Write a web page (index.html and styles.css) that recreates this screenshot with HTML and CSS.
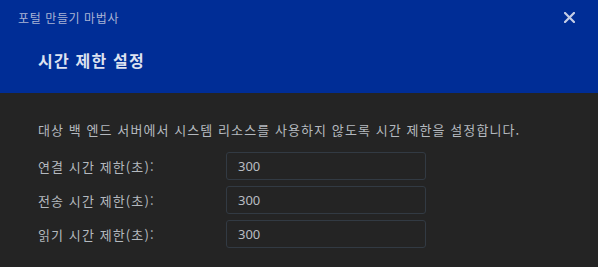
FILE: index.html
```html
<!DOCTYPE html>
<html lang="ko">
<head>
<meta charset="utf-8">
<link rel="stylesheet" href="styles.css">
</head>
<body>
<div class="dialog">
  <header class="head">
    <div class="topbar">
      <span class="wizard">포털 만들기 마법사</span>
      <button class="close" aria-label="닫기">
        <svg width="11" height="11" viewBox="0 0 11 11"><path d="M1 1 L10 10 M10 1 L1 10" stroke="#c4cde6" stroke-width="2.2" stroke-linecap="square"/></svg>
      </button>
    </div>
    <h1 class="title">시간 제한 설정</h1>
  </header>
  <main class="body">
    <p class="desc">대상 백 엔드 서버에서 시스템 리소스를 사용하지 않도록 시간 제한을 설정합니다.</p>
    <div class="row"><label class="label">연결 시간 제한(초):</label><input class="field" value="300"></div>
    <div class="row"><label class="label">전송 시간 제한(초):</label><input class="field" value="300"></div>
    <div class="row"><label class="label">읽기 시간 제한(초):</label><input class="field" value="300"></div>
  </main>
</div>
</body>
</html>
```
FILE: styles.css
```css
* { box-sizing: border-box; }
html, body { margin: 0; padding: 0; }
body {
  width: 598px;
  height: 267px;
  overflow: hidden;
  background: #242424;
  font-family: "Noto Sans CJK KR", "Noto Sans", sans-serif;
}
.head {
  background: #002d96;
  height: 93px;
  padding: 0 18px 0 18px;
}
.topbar {
  display: flex;
  justify-content: space-between;
  align-items: center;
  height: 35px;
}
.wizard {
  color: #a9b3d4;
  font-size: 12px;
  letter-spacing: 0.6px;
}
.close {
  background: none;
  border: 0;
  padding: 0;
  margin-right: 5px;
  display: flex;
  cursor: pointer;
}
.title {
  margin: 13px 0 0 20px;
  color: #dde2f0;
  font-size: 16px;
  font-weight: bold;
  letter-spacing: 1.2px;
  line-height: 24px;
}
.body {
  padding: 28px 38px 0 38px;
}
.desc {
  margin: 0 0 13px 0;
  color: #b4b9bf;
  font-size: 13px;
  letter-spacing: 1.08px;
  line-height: 18px;
}
.row {
  display: flex;
  align-items: center;
  height: 28px;
  margin-bottom: 6px;
}
.label {
  width: 188px;
  color: #b4b9bf;
  font-size: 13px;
  letter-spacing: 1.1px;
}
.field {
  width: 200px;
  height: 28px;
  background: #242424;
  border: 1px solid #323a43;
  border-radius: 3px;
  color: #b8bcc2;
  font-family: "Noto Sans", sans-serif;
  font-size: 13px;
  padding: 0 11px;
  outline: none;
}
```
